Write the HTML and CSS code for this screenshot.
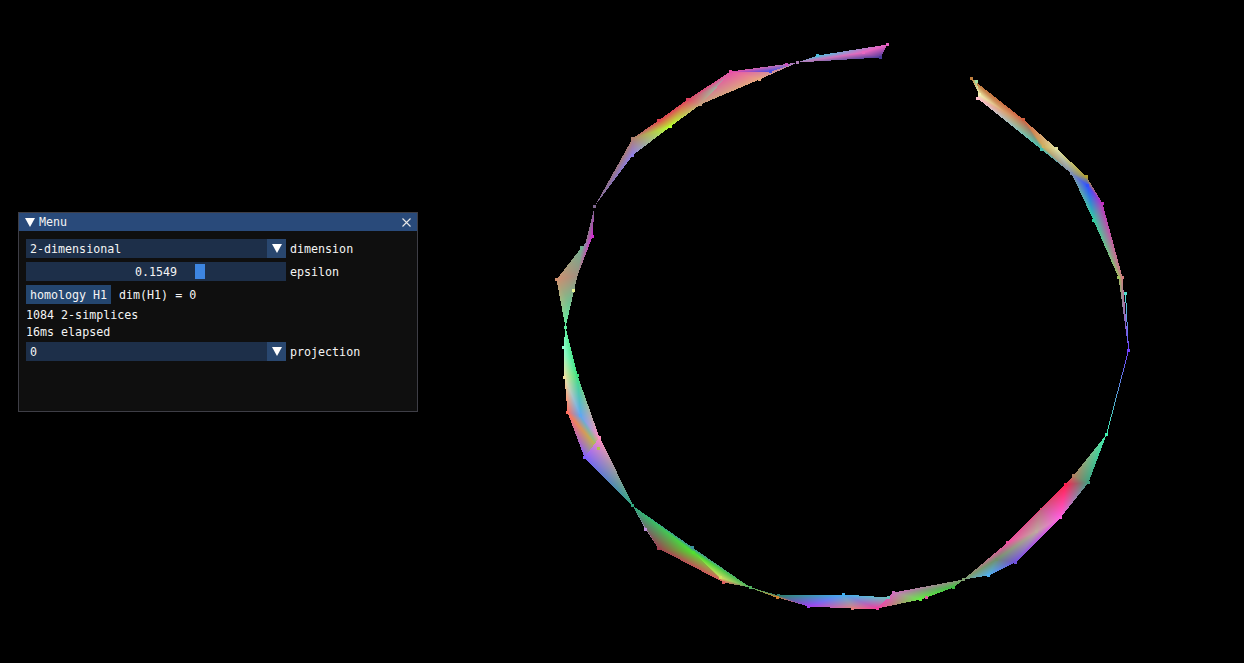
FILE: index.html
```html
<!DOCTYPE html>
<html lang="en">
<head>
<meta charset="utf-8">
<title>Menu</title>
<link rel="stylesheet" href="styles.css">
</head>
<body>
<canvas id="view" class="view" width="1244" height="663"></canvas>
<section class="window">
  <header class="titlebar">
    <svg class="collapse" width="10" height="9" viewBox="0 0 10 9"><polygon points="0,0 10,0 5,9" fill="#fff"/></svg>
    <span class="title">Menu</span>
    <svg class="close" width="9" height="9" viewBox="0 0 9 9"><path d="M0.5 0.5L8.5 8.5M8.5 0.5L0.5 8.5" stroke="#e8e8e8" stroke-width="1.1" fill="none"/></svg>
  </header>
  <div class="content">
    <div class="row">
      <div class="frame combo"><span class="value">2-dimensional</span><span class="arrow"><svg width="10" height="9" viewBox="0 0 10 9"><polygon points="0,0 10,0 5,9" fill="#fff"/></svg></span></div>
      <span class="label">dimension</span>
    </div>
    <div class="row">
      <div class="frame slider"><span class="slider-value">0.1549</span><span class="grab"></span></div>
      <span class="label">epsilon</span>
    </div>
    <div class="row">
      <button class="button">homology H1</button>
      <span class="label button-note">dim(H1) = 0</span>
    </div>
    <div class="text">1084 2-simplices</div>
    <div class="text">16ms elapsed</div>
    <div class="row">
      <div class="frame combo"><span class="value">0</span><span class="arrow"><svg width="10" height="9" viewBox="0 0 10 9"><polygon points="0,0 10,0 5,9" fill="#fff"/></svg></span></div>
      <span class="label">projection</span>
    </div>
  </div>
</section>
<script src="script.js"></script>
</body>
</html>
```
FILE: styles.css
```css
* { box-sizing: border-box; }
html, body { margin: 0; height: 100%; background: #000; overflow: hidden; }
body {
  font-family: "DejaVu Sans Mono", "Liberation Mono", monospace;
  font-size: 11.67px;
  color: #f4f4f4;
}
.view { position: absolute; left: 0; top: 0; display: block; }
.window {
  position: absolute;
  left: 18px;
  top: 212px;
  width: 400px;
  height: 200px;
  background: #0f0f0f;
  border: 1px solid #3e3e46;
}
.titlebar {
  height: 18px;
  background: #294a7a;
  display: flex;
  align-items: center;
  padding: 0 6px;
  gap: 4px;
}
.title { flex: 1; line-height: 18px; }
.content {
  display: flex;
  flex-direction: column;
  gap: 4px;
  padding: 8px 7px;
}
.row { display: flex; align-items: center; height: 19px; gap: 4px; }
.frame {
  position: relative;
  width: 260px;
  height: 19px;
  background: #1d2f49;
  display: flex;
  align-items: center;
}
.value { flex: 1; padding-left: 4px; }
.arrow {
  width: 19px;
  height: 19px;
  background: #29476f;
  display: flex;
  align-items: center;
  justify-content: center;
}
.slider { justify-content: center; }
.grab {
  position: absolute;
  left: 169px;
  top: 2px;
  width: 10px;
  height: 15px;
  background: #3d85e0;
}
.button {
  width: 85px;
  height: 19px;
  padding: 0;
  border: 0;
  background: #24466f;
  color: inherit;
  font: inherit;
}
.button-note { margin-left: 4px; }
.text { height: 13px; line-height: 13px; padding-top: 1px; }
```
FILE: script.js
```js
var V = {
  a1:[887,44,"#e860c0"], a2:[880,57,"#483a98"], a3:[863,52,"#e868c0"], a4:[817,55,"#50c0e0"], p1:[797,62,"#b080b8"],
  b1:[786,64,"#d050c0"], b2:[770,71,"#5050e0"], b3:[759,79,"#e8a880"], b4:[730,71,"#e850a8"],
  c1:[700,104,"#c8a080"], c0:[716,87,"#a0b0a0"], c2:[687,99,"#e04060"], c3:[670,126,"#b8ff30"], c4:[658,120,"#e04050"], c5:[632,138,"#b08070"], c6:[632,155,"#9080e8"], p2:[594,206,"#806890"],
  d1:[592,236,"#d030d0"], d2:[581,247,"#70b090"], d3:[556,279,"#d09070"], d4:[577,275,"#a09080"], d6:[569,302,"#70c090"], d5:[573,290,"#e8f090"], p3:[565,327,"#60f0a0"],
  e1:[563,347,"#90ffd0"], e2:[577,375,"#40e080"], e3:[564,377,"#f0e0a0"], e4:[567,412,"#ff7060"], e5:[580,415,"#60a8f0"],
  e6:[599,437,"#ff90c0"], e7:[598,448,"#b0c050"], e8:[584,457,"#8060ff"], p4:[632,505,"#30a880"],
  f1:[645,529,"#c090e0"], f2:[658,548,"#a04050"], f3:[692,547,"#3f90a0"], f4:[693,552,"#50e030"], f5:[723,582,"#e06060"], f6:[720,577,"#d0e060"], p5:[750,587,"#50b060"],
  g1:[778,595,"#308070"], g2:[777,597,"#d08030"],
  h1:[808,606,"#a040f0"], h2:[843,594,"#40b0f0"], h3:[852,608,"#e08080"], h4:[877,608,"#f040a0"], h5:[893,592,"#d070c0"], h6:[888,597,"#70c0c0"],
  h7:[920,599,"#60f040"], h8:[926,597,"#e060a0"], h9:[953,587,"#40c040"], p6:[963,579,"#80a070"],
  i1:[988,575,"#50b0f0"], i2:[1015,562,"#7050e0"], i3:[996,559,"#709070"], i4:[1007,542,"#f050a0"], i5:[1036,531,"#c0a8a0"], i6:[1060,517,"#ff60e0"],
  i11:[1040,508,"#c06080"], i7:[1065,484,"#ff2050"], i8:[1073,475,"#b08060"], i9:[1088,482,"#40a080"], i10:[1106,434,"#40f0b0"], p7:[1128,350,"#7040ff"],
  j1:[1125,293,"#50e0d0"], j2:[1122,277,"#d08080"], j3:[1118,277,"#a0c060"], j4:[1102,203,"#c030c0"], j5:[1093,220,"#30d0a0"], j6:[1087,185,"#3050ff"], j7:[1086,176,"#b0a030"],
  k1:[1071,173,"#8090b0"], k2:[1056,148,"#e0e0a0"], k3:[1043,146,"#d0b060"], k4:[1041,149,"#40c0b0"], k5:[1023,119,"#d06040"], k6:[971,78,"#c08040"], k7:[976,81,"#a0e0a0"], k8:[979,94,"#f0f0b0"], k9:[977,98,"#ffc0d0"],
  k10:[1005,112,"#d8a070"]
};
var T = [
  "a1 a2 a3","a1 a3 a4","a4 a3 p1","a2 a3 p1",
  "p1 b1 b4","p1 b3 b4","p1 b2 b4",
  "b3 b4 c1","b4 c2 c0","c2 c0 c1","c2 c1 c3","c2 c3 c4","c4 c3 c5","c3 c5 c6","c5 c6 p2",
  "p2 d1 d4","d1 d2 d4","d2 d3 d4","d3 d4 d6","d3 d6 p3","d4 d5 p3","d4 d6 p3",
  "p3 e1 e2","e1 e3 e2","e2 e3 e5","e3 e4 e5","e2 e6 e5","e5 e6 e7","e4 e5 e7","e4 e7 e8","e7 e6 e8","e6 e8 p4",
  "p4 f1 f2","p4 f2 f4","p4 f3 f4","f2 f4 f5","f4 f5 f6","f4 f6 p5","f3 f4 p5","f5 f6 p5",
  "p5 g1 g2",
  "g1 g2 h1","g1 h1 h2","h1 h2 h3","h2 h3 h4","h2 h4 h6","h6 h5 h4","h5 h4 h7","h5 h7 h9","h7 h8 h9","h5 h9 p6",
  "p6 i1 i3","i1 i2 i3","p6 i3 i4","i3 i2 i5","i3 i4 i5","i4 i5 i11","i5 i6 i11","i2 i5 i6","i11 i6 i7","i4 i11 i7","i7 i6 i9","i7 i8 i9","i8 i9 i10",
  "j3 j2 p7","j2 j3 j5","j2 j4 j5","j4 j5 j6","j5 j6 k1","j6 j7 k1","j4 j6 j7",
  "k1 j7 k2","k1 k2 k3","k1 k3 k4","k3 k4 k5","k3 k2 k5",
  "k4 k5 k10","k4 k10 k9","k6 k5 k10","k6 k10 k8","k8 k10 k9","k6 k7 k8"
];
var L = ["i10 p7","j1 p7","p4 e6","p5 g2"];
var HIDDEN = { c0: 1, d4: 1, d6: 1, i11: 1, k10: 1 };

var cv = document.getElementById("view");
var ctx = cv.getContext("2d");
var img = ctx.createImageData(1244, 663);
var px = img.data;

function rgb(h) {
  return [parseInt(h.substr(1,2),16), parseInt(h.substr(3,2),16), parseInt(h.substr(5,2),16)];
}
Object.keys(V).forEach(function (k) { V[k][2] = rgb(V[k][2]); });

function put(x, y, c) {
  if (x < 0 || y < 0 || x >= 1244 || y >= 663) return;
  var i = (y * 1244 + x) * 4;
  px[i] = c[0]; px[i+1] = c[1]; px[i+2] = c[2]; px[i+3] = 255;
}
function tri(a, b, c) {
  var minx = Math.floor(Math.min(a[0], b[0], c[0])), maxx = Math.ceil(Math.max(a[0], b[0], c[0]));
  var miny = Math.floor(Math.min(a[1], b[1], c[1])), maxy = Math.ceil(Math.max(a[1], b[1], c[1]));
  var d = (b[1]-c[1])*(a[0]-c[0]) + (c[0]-b[0])*(a[1]-c[1]);
  if (!d) return;
  for (var y = miny; y <= maxy; y++) for (var x = minx; x <= maxx; x++) {
    var u = ((b[1]-c[1])*(x-c[0]) + (c[0]-b[0])*(y-c[1])) / d;
    var v = ((c[1]-a[1])*(x-c[0]) + (a[0]-c[0])*(y-c[1])) / d;
    var w = 1 - u - v;
    if (u < 0 || v < 0 || w < 0) continue;
    put(x, y, [u*a[2][0]+v*b[2][0]+w*c[2][0], u*a[2][1]+v*b[2][1]+w*c[2][1], u*a[2][2]+v*b[2][2]+w*c[2][2]]);
  }
}
function line(a, b) {
  var n = Math.max(Math.abs(a[0]-b[0]), Math.abs(a[1]-b[1]));
  for (var i = 0; i <= n; i++) {
    var t = i / n;
    put(Math.round(a[0]+(b[0]-a[0])*t), Math.round(a[1]+(b[1]-a[1])*t),
      [a[2][0]+(b[2][0]-a[2][0])*t, a[2][1]+(b[2][1]-a[2][1])*t, a[2][2]+(b[2][2]-a[2][2])*t]);
  }
}
T.forEach(function (s) { var p = s.split(" "); tri(V[p[0]], V[p[1]], V[p[2]]); });
L.forEach(function (s) { var p = s.split(" "); line(V[p[0]], V[p[1]]); });
Object.keys(V).forEach(function (k) {
  if (HIDDEN[k]) return;
  var p = V[k];
  for (var dy = -1; dy <= 1; dy++) for (var dx = -1; dx <= 1; dx++) put(p[0]+dx, p[1]+dy, p[2]);
});
ctx.putImageData(img, 0, 0);
```
